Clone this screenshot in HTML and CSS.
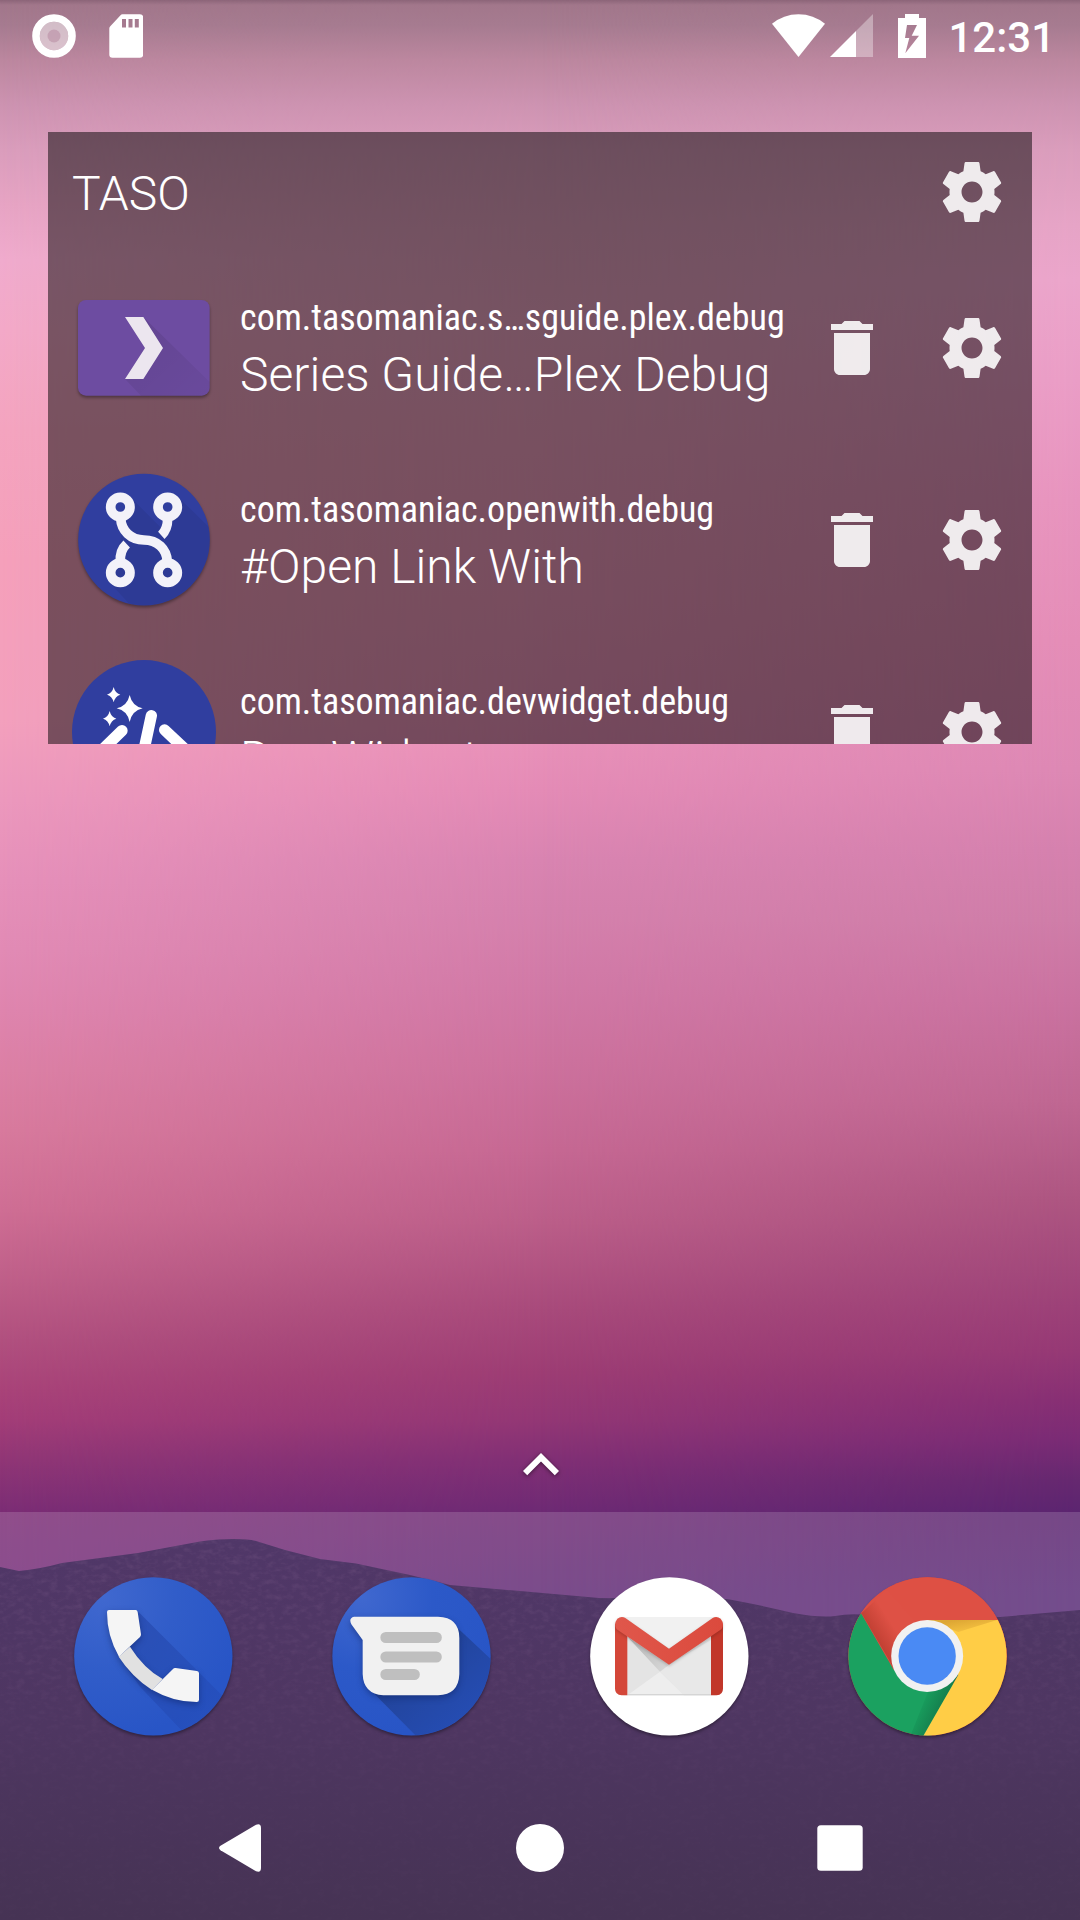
FILE: index.html
```html
<!DOCTYPE html>
<html lang="en">
<head>
<meta charset="utf-8">
<title>Home</title>
<link rel="stylesheet" href="styles.css">
</head>
<body>
<svg class="defs" width="0" height="0" aria-hidden="true">
  <symbol id="gear" viewBox="0 0 24 24"><path d="M19.43 12.98c.04-.32.07-.64.07-.98s-.03-.66-.07-.98l2.11-1.65c.19-.15.24-.42.12-.64l-2-3.46c-.12-.22-.39-.3-.61-.22l-2.49 1c-.52-.4-1.08-.73-1.69-.98l-.38-2.65C14.46 2.18 14.25 2 14 2h-4c-.25 0-.46.18-.49.42l-.38 2.65c-.61.25-1.17.59-1.69.98l-2.49-1c-.23-.09-.49 0-.61.22l-2 3.46c-.13.22-.07.49.12.64l2.11 1.65c-.04.32-.07.65-.07.98s.03.66.07.98l-2.11 1.65c-.19.15-.24.42-.12.64l2 3.46c.12.22.39.3.61.22l2.49-1c.52.4 1.08.73 1.69.98l.38 2.65c.03.24.24.42.49.42h4c.25 0 .46-.18.49-.42l.38-2.65c.61-.25 1.17-.59 1.69-.98l2.49 1c.23.09.49 0 .61-.22l2-3.46c.12-.22.07-.49-.12-.64l-2.11-1.65zM12 15.5c-1.93 0-3.5-1.57-3.5-3.5s1.57-3.5 3.5-3.5 3.5 1.57 3.5 3.5-1.57 3.5-3.5 3.5z"/></symbol>
  <symbol id="trash" viewBox="0 0 24 24"><path d="M6 19c0 1.100.9 2 2 2h8c1.100 0 2-.9 2-2V7H6v12zM19 4h-3.500l-1-1h-5l-1 1H5v2h14V4z"/></symbol>
</svg>

<div class="wallpaper">
  <div class="sky sky-left"></div>
  <div class="sky sky-center"></div>
  <div class="sky sky-right"></div>
</div>

<div class="screen">
  <header class="status">
    <div class="status-group">
      <svg class="ic-record" width="44" height="44" viewBox="0 0 44 44"><circle cx="22" cy="22" r="18" fill="none" stroke="#fff" stroke-width="7.600"/><circle cx="22" cy="22" r="14.200" fill="#fff" opacity=".5"/><circle cx="22" cy="22" r="6.500" fill="#b88ba2" opacity=".55"/></svg>
      <svg class="ic-sd" width="34" height="44" viewBox="109 14 34 44"><path fill="#fff" fill-rule="evenodd" d="M122.500 14.300H140q3.200 0 3.200 3.200v37q0 3.200-3.200 3.200h-27.500q-3.200 0-3.200-3.200V28.500q0-1.300 1-2.300l10-10.600q1-1.300 2.200-1.300zM122 19v8.600h4V19zm6.500 0v8.600h4V19zm6.300 0v8.600h4V19z"/></svg>
    </div>
    <div class="status-group">
      <svg width="104" height="46" viewBox="772 13 104 46"><path fill="#fff" d="M799.500 57 773 23.800Q784.500 14.200 799.500 14.200T826 23.800z"/><path fill="#fff" opacity=".35" d="M857 31v26h17V14z"/><path fill="#fff" d="M831 57h26V31z"/></svg>
      <svg class="ic-battery" width="28" height="44" viewBox="899 14 28 44"><path fill="#fff" fill-rule="evenodd" d="M906 14h14v4h7v40h-28V18h7zM908 25l-2 13h4.300l-4 15.300L920 35.700h-7.300L918 25z"/></svg>
      <span class="clock">12:31</span>
    </div>
  </header>

  <main class="widget">
    <div class="widget-head">
      <h1 class="widget-title">TASO</h1>
      <svg class="action"><use href="#gear"/></svg>
    </div>

    <div class="row">
      <svg class="app-icon" viewBox="96 -12 432 432">
        <defs><linearGradient id="ls1" x1="0" y1="0" x2="1" y2="1"><stop offset="0" stop-color="#000" stop-opacity=".1"/><stop offset="1" stop-color="#000" stop-opacity=".03"/></linearGradient></defs>
        <rect class="soft" x="114" y="60" width="395" height="287" rx="24" fill="#6d4ca1"/>
        <path fill="url(#ls1)" d="M310 111 509 306v17q0 24-24 24H303l-48-50 60-93z"/>
        <path fill="#ece6ef" d="M255 111h55l59 93-59 93h-55l60-93z"/>
      </svg>
      <div class="labels"><div class="package">com.tasomaniac.s…sguide.plex.debug</div><div class="name">Series Guide…Plex Debug</div></div>
      <svg class="action"><use href="#trash"/></svg>
      <svg class="action"><use href="#gear"/></svg>
    </div>

    <div class="row">
      <svg class="app-icon" viewBox="96 564 432 432">
        <defs><clipPath id="c2"><circle cx="312" cy="779" r="197"/></clipPath></defs>
        <circle class="soft" cx="312" cy="779" r="197.500" fill="#303e9f"/>
        <g clip-path="url(#c2)"><path fill="#000" opacity=".06" d="M271 651 376 756 414 651 620 850 500 1050 340 1050 210 909z"/></g>
        <g fill="none" stroke="#f3f2f9" stroke-width="29">
          <circle cx="241" cy="681" r="29"/><circle cx="383" cy="681" r="29"/><circle cx="241" cy="878" r="29"/><circle cx="383" cy="878" r="29"/>
          <path d="M242 715C244 752 272 780 312 780S380 806 382 845M383 715q0 34-19 51M241 845q-2-34 19-53"/>
        </g>
      </svg>
      <div class="labels"><div class="package">com.tasomaniac.openwith.debug</div><div class="name">#Open Link With</div></div>
      <svg class="action"><use href="#trash"/></svg>
      <svg class="action"><use href="#gear"/></svg>
    </div>

    <div class="row">
      <svg class="app-icon" viewBox="96 120 432 432">
        <circle cx="312" cy="336" r="216" fill="#303e9f"/>
        <path fill="#fff" d="M221 201q4 18 20 23-16 5-20 23-4-18-20-23 16-5 20-23zM209 273q4 18 20 23-16 5-20 23-4-18-20-23 16-5 20-23zM269 225q7 33 39 40-32 7-39 41-7-34-39-41 32-7 39-40z"/>
        <path fill="none" stroke="#fff" stroke-width="34" stroke-linecap="round" d="M334 287 292 482M246 332 180 396 246 460M374 330 444 396 374 462"/>
      </svg>
      <div class="labels"><div class="package">com.tasomaniac.devwidget.debug</div><div class="name">Dev Widget</div></div>
      <svg class="action"><use href="#trash"/></svg>
      <svg class="action"><use href="#gear"/></svg>
    </div>
  </main>

  <div class="pager">
    <svg class="caret" width="72" height="72" viewBox="0 0 24 24"><path fill="#fff" d="M12 8l-6 6 1.410 1.410L12 10.830l4.590 4.580L18 14z"/></svg>
  </div>

  <footer class="bottom">
    <svg class="hills" viewBox="0 1512 1080 408" preserveAspectRatio="none">
      <defs>
        <linearGradient id="hg" x1="0" y1="0" x2="0" y2="1"><stop offset="0" stop-color="#503768"/><stop offset=".5" stop-color="#4e3661"/><stop offset=".8" stop-color="#493459"/><stop offset="1" stop-color="#463354"/></linearGradient>
        <filter id="grain" x="0" y="0" width="100%" height="100%"><feTurbulence type="fractalNoise" baseFrequency=".12 .2" numOctaves="3" seed="4"/><feColorMatrix values="0 0 0 0 .42  0 0 0 0 .23  0 0 0 0 .42  1.800 0 0 0 -.78"/><feComposite in2="SourceGraphic" operator="in"/></filter>
        <linearGradient id="gf" x1="0" y1="0" x2="0" y2="1"><stop offset="0" stop-color="#fff"/><stop offset=".7" stop-color="#fff" stop-opacity=".15"/></linearGradient>
        <mask id="gm"><rect y="1512" width="1080" height="408" fill="url(#gf)"/></mask>
        <path id="hill" d="M0 1567 19 1571Q40 1569 62 1563L138 1553 200 1541.500Q238 1537 256 1541L285 1550 320 1559 356 1563.500 410 1575 450 1585 520 1591 599 1598 727 1599Q760 1605 793 1613 820 1618 835 1616 850 1613 868 1615 940 1620 1000 1617L1080 1610V1920H0z"/>
      </defs>
      <use href="#hill" fill="url(#hg)"/>
      <g mask="url(#gm)" opacity=".2"><use href="#hill" filter="url(#grain)"/></g>
    </svg>
    <div class="dock">
      <svg class="dock-icon" viewBox="69 78 540 540">
        <defs>
          <radialGradient id="bl" gradientUnits="userSpaceOnUse" cx="190" cy="170" r="430"><stop offset="0" stop-color="#4068cf"/><stop offset=".5" stop-color="#315dc9"/><stop offset="1" stop-color="#2855c6"/></radialGradient>
          <clipPath id="cp"><circle cx="340" cy="349" r="237"/></clipPath>
          <linearGradient id="ps" x1="0" y1="0" x2="1" y2="1"><stop offset="0" stop-color="#1d3b9c" stop-opacity=".5"/><stop offset="1" stop-color="#1d3b9c" stop-opacity=".08"/></linearGradient>
        </defs>
        <circle class="soft" cx="340" cy="349" r="237.500" fill="url(#bl)"/>
        <path clip-path="url(#cp)" fill="url(#ps)" d="M292 212 600 520 500 650 300 440 236 350 270 320z"/>
        <g class="glow">
        <path fill="#e1e1e1" d="M236 350 270 320Q312 386 368 417L336 450Q276 411 236 350z"/>
        <path fill="#f5f5f5" d="M207 210H287Q292 210 293 216L303 283Q303 288 300 291L237 350Q201 288 201 216 201 210 207 210zM336 449 399 387Q402 383 407 384L471 393Q477 394 477 400V479Q477 486 470 486 400 486 336 449z"/>
        </g>
      </svg>
      <svg class="dock-icon" viewBox="843 78 540 540">
        <defs>
          <radialGradient id="bm" gradientUnits="userSpaceOnUse" cx="964" cy="170" r="430"><stop offset="0" stop-color="#4068cf"/><stop offset=".5" stop-color="#2c59c8"/><stop offset="1" stop-color="#2855c6"/></radialGradient>
          <clipPath id="cm"><circle cx="1114.500" cy="349" r="237"/></clipPath>
          <linearGradient id="ms" x1="0" y1="0" x2=".8" y2=".8"><stop offset=".3" stop-color="#1e3b86" stop-opacity=".8"/><stop offset="1" stop-color="#2346a4" stop-opacity=".5"/></linearGradient>
        </defs>
        <circle class="soft" cx="1114.500" cy="349" r="237.500" fill="url(#bm)"/>
        <path clip-path="url(#cm)" fill="url(#ms)" d="M1240 252 1400 402V620H1160L985 443z"/>
        <path class="glow" fill="#f1f1f1" d="M942 230H1194Q1258 232 1258 294V402Q1256 464 1194 466H1030Q970 462 968 402V300L934 253Q925 234 942 230z"/>
        <path fill="none" stroke="#bfbfbf" stroke-width="33" stroke-linecap="round" d="M1037.500 292.500H1189M1037.500 351H1189M1037.500 403.500H1123"/>
      </svg>
      <svg class="dock-icon" viewBox="57 78 540 540">
        <circle class="soft" cx="328" cy="349" r="237.500" fill="#fff"/>
        <defs><linearGradient id="gs" gradientUnits="userSpaceOnUse" x1="230" y1="310" x2="360" y2="440"><stop offset="0" stop-color="#bbb"/><stop offset="1" stop-color="#e6e6e6"/></linearGradient>
        <linearGradient id="gl" x1="0" y1="0" x2="1" y2="0"><stop offset="0" stop-color="#e0574b"/><stop offset="1" stop-color="#db4a3d"/></linearGradient></defs>
        <path fill="#e4e4e4" d="M190 231H466V466H190z"/>
        <path fill="#f1f1f1" d="M185 231H470L327 326z"/>
        <path fill="url(#gs)" d="M202 290 300 395 372 466H453V290L327 374z"/>
        <path fill="#e8e8e8" d="M327 374 453 300V466H372L300 395z"/>
        <path fill="#eee" d="M300 395 372 466H202z"/>
        <path fill="#d5d5d5" d="M202 462h251v4H202z"/>
        <path fill="#d44739" d="M165 250 202 280V466H185Q165 464 165 446z"/>
        <path fill="#c1372a" d="M489 250 453 280V466H470Q489 464 489 446z"/>
        <path class="fold" fill="url(#gl)" d="M196 234 327 326 458 234Q470 227 482 236 495 252 484 268L327 374 170 268Q160 252 172 236 184 227 196 234z"/>
      </svg>
      <svg class="dock-icon" viewBox="831 78 540 540">
        <defs>
          <clipPath id="cc"><circle cx="1102.500" cy="349" r="237.500"/></clipPath>
          <linearGradient id="cr" gradientUnits="userSpaceOnUse" x1="940" y1="320" x2="1010" y2="275"><stop offset="0" stop-color="#b93b2e"/><stop offset="1" stop-color="#de5145"/></linearGradient>
          <linearGradient id="cg" gradientUnits="userSpaceOnUse" x1="1160" y1="505" x2="1085" y2="470"><stop offset="0" stop-color="#14784a"/><stop offset="1" stop-color="#19a15f"/></linearGradient>
          <linearGradient id="cy" gradientUnits="userSpaceOnUse" x1="1200" y1="238" x2="1210" y2="295"><stop offset="0" stop-color="#dda634"/><stop offset="1" stop-color="#ffcd46"/></linearGradient>
        </defs>
        <circle class="soft" cx="1102.500" cy="349" r="237.500" fill="#db4a3d"/>
        <g clip-path="url(#cc)">
          <path fill="#de5044" d="M830 100h560v260H830z"/>
          <path fill="url(#cr)" d="M904 220 1002 385 1102 340 1060 240 980 150z"/>
          <path fill="#1ba160" d="M904 221 840 200V640H1089L1190 430 1102 440 1001 389z"/>
          <path fill="url(#cg)" d="M1089 588 1198 400 1110 440 1050 590z"/>
          <path fill="#ffcd46" d="M1102 240H1400V640H1060L1195 405z"/>
          <path fill="url(#cy)" d="M1102 240H1311L1195 276z"/>
        </g>
        <circle cx="1101.500" cy="348" r="108" fill="#f1f1f1"/><circle cx="1101.500" cy="348" r="86" fill="#4a8af4"/>
      </svg>
    </div>
    <nav class="nav">
      <svg class="nav-back" width="48" height="48" viewBox="0 0 48 48"><path fill="#fff" d="M4.500 21.800 40 .8Q45 -1 45 4v40q0 5-5 3.200L4.500 26.200Q1.500 24 4.500 21.800z"/></svg>
      <svg width="48" height="48" viewBox="0 0 48 48"><circle cx="24" cy="24" r="24" fill="#fff"/></svg>
      <svg width="48" height="48" viewBox="0 0 48 48"><rect x="1.300" y="1.300" width="45.400" height="45.400" rx="3.500" fill="#fff"/></svg>
    </nav>
  </footer>
</div>
</body>
</html>
```
FILE: styles.css
```css
* { box-sizing: border-box; margin: 0; }
body { width: 1080px; height: 1920px; position: relative; overflow: hidden; font-family: Roboto, "Noto Sans", sans-serif; color: #fff; }
.defs { position: absolute; }
svg { display: block; flex: none; }

.wallpaper, .sky { position: absolute; inset: 0; }
.sky-left { background: linear-gradient(180deg, #8c6579 0, #a2778b 5px, #a67b90 25px, #bc879f 60px, #cd93b1 105px, #da9dbc 150px, #e7a4c4 205px, #f0abcd 260px, #f3a9c8 330px, #f4a4bf 430px, #f5a0bb 560px, #f3a0bd 720px, #ec98bd 800px, #e690ba 880px, #e28bb5 950px, #df85ae 1010px, #dc80a5 1070px, #d87a9d 1130px, #cf6e94 1210px, #be5e88 1285px, #b1507f 1340px, #a94379 1390px, #a33d78 1420px, #923776 1455px, #7c2d75 1511px, #742c7a 1590px); }
.sky-center { background: linear-gradient(180deg, #8c6579 0, #a2778b 5px, #a67b90 25px, #bc879f 60px, #cd93b1 105px, #da9dbc 150px, #e5a3c1 230px, #eda6c4 320px, #f0a0c0 450px, #ef9abd 600px, #ea93ba 720px, #e48bb6 790px, #d984b1 860px, #d581ad 910px, #d27ba8 970px, #cd729e 1060px, #c66893 1150px, #bb5e89 1222px, #a84a7b 1310px, #9d3d74 1372px, #933775 1420px, #802f75 1462px, #6e2a74 1511px, #622a75 1590px);
  mask-image: linear-gradient(90deg, transparent, #000 50%); }
.sky-right { background: linear-gradient(180deg, #8c6579 0, #a2778b 5px, #a67b90 25px, #bc879f 60px, #cd93b1 105px, #da9dbc 150px, #e6a4c6 225px, #eba5cb 280px, #ea9dc6 380px, #e794be 500px, #e48db7 640px, #dd88b4 770px, #d581ae 850px, #cf7da8 920px, #ca72a0 1000px, #bf6792 1100px, #ad5581 1200px, #a0467a 1280px, #963975 1350px, #872f74 1400px, #7a2b75 1440px, #662870 1480px, #5c2570 1511px, #592b77 1600px);
  mask-image: linear-gradient(90deg, transparent 50%, #000); }

.screen { position: relative; height: 100%; display: flex; flex-direction: column; }

.status { height: 72px; padding: 0 25px 0 32px; display: flex; justify-content: space-between; }
.status-group { display: flex; align-items: flex-start; }
.ic-record { margin-top: 14px; }
.ic-sd { margin: 14px 0 0 33px; }
.status-group > svg:first-child:not(.ic-record) { margin-top: 13px; }
.ic-battery { margin: 14px 22px 0 23px; }
.clock { font-size: 42px; line-height: 49px; font-weight: 500; margin-top: 13px; }

.widget { margin: 60px 48px 0; height: 612px; background: rgba(0, 0, 0, .5); overflow: hidden; flex: none; }
.widget-head { height: 120px; padding: 0 24px; display: flex; align-items: center; justify-content: space-between; }
.widget-title { font-size: 48px; font-weight: 300; line-height: 56px; padding-top: 4px; }
.action { width: 72px; height: 72px; fill: #fff; opacity: .89; }
.row { height: 192px; padding: 0 24px; display: flex; align-items: center; gap: 48px; }
.app-icon { width: 144px; height: 144px; margin-right: -24px; overflow: visible; }
.soft { filter: drop-shadow(0 6px 5px rgba(0, 0, 0, .35)); }
.labels { flex: 1; min-width: 0; white-space: nowrap; padding-top: 4px; }
.package { font-family: "Roboto Condensed", Roboto, sans-serif; font-stretch: condensed; font-size: 36px; line-height: 42px; }
.name { font-size: 48px; line-height: 56px; font-weight: 300; margin-top: 8px; letter-spacing: .04px; }

.pager { flex: 1; display: flex; justify-content: center; align-items: flex-end; padding: 0 0 11px 1px; }
.caret { filter: drop-shadow(0 1px 2px rgba(0, 0, 0, .5)); }

.bottom { position: relative; height: 408px; flex: none; background: rgba(255, 255, 255, .16); }
.hills { position: absolute; inset: 0; width: 1080px; height: 408px; }
.dock { position: relative; height: 264px; padding: 54px 63px 0; display: flex; gap: 78px; }
.dock-icon { width: 180px; height: 180px; }
.glow { filter: drop-shadow(0 8px 10px rgba(10, 30, 90, .45)); }
.fold { filter: drop-shadow(0 4px 4px rgba(0, 0, 0, .2)); }
.nav { position: relative; height: 144px; padding: 0 216px; display: flex; justify-content: space-between; align-items: center; }
```
